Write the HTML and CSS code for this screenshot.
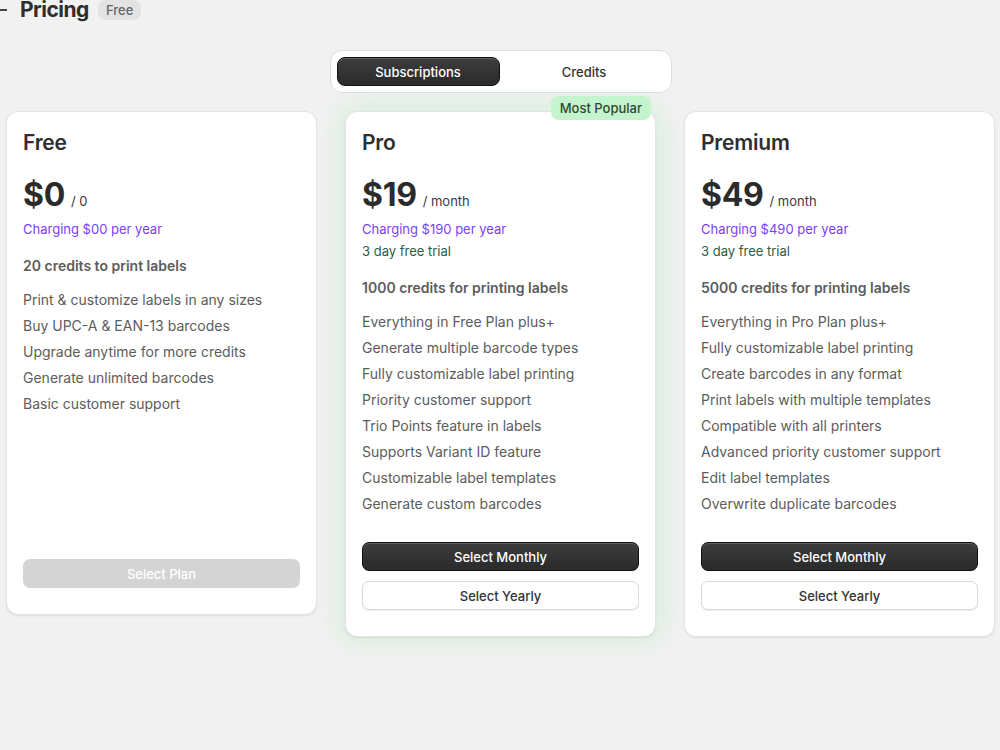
FILE: index.html
```html
<!DOCTYPE html>
<html lang="en">
<head>
    <meta charset="UTF-8">
    <meta name="viewport" content="width=device-width, initial-scale=1.0">
    <title>Pricing</title>
    <link rel="stylesheet" href="styles.css">
</head>
<body>
    <header class="page-header">
        <span class="back-dash"></span>
        <h1>Pricing</h1>
        <span class="tag">Free</span>
    </header>

    <main class="page">
        <div class="toggle">
            <button class="toggle-btn active">Subscriptions</button>
            <button class="toggle-btn">Credits</button>
        </div>

        <div class="plans">
            <!-- Free -->
            <div class="plan plan-free">
                <h2>Free</h2>
                <div class="price"><span class="amount">$0</span><span class="period">/ 0</span></div>
                <p class="charge">Charging $00 per year</p>
                <p class="credits">20 credits to print labels</p>
                <ul class="features">
                    <li>Print &amp; customize labels in any sizes</li>
                    <li>Buy UPC-A &amp; EAN-13 barcodes</li>
                    <li>Upgrade anytime for more credits</li>
                    <li>Generate unlimited barcodes</li>
                    <li>Basic customer support</li>
                </ul>
                <div class="actions">
                    <button class="btn btn-disabled">Select Plan</button>
                </div>
            </div>

            <!-- Pro -->
            <div class="plan plan-popular">
                <span class="badge">Most Popular</span>
                <h2>Pro</h2>
                <div class="price"><span class="amount">$19</span><span class="period">/ month</span></div>
                <p class="charge">Charging $190 per year</p>
                <p class="trial">3 day free trial</p>
                <p class="credits">1000 credits for printing labels</p>
                <ul class="features">
                    <li>Everything in Free Plan plus+</li>
                    <li>Generate multiple barcode types</li>
                    <li>Fully customizable label printing</li>
                    <li>Priority customer support</li>
                    <li>Trio Points feature in labels</li>
                    <li>Supports Variant ID feature</li>
                    <li>Customizable label templates</li>
                    <li>Generate custom barcodes</li>
                </ul>
                <div class="actions">
                    <button class="btn btn-dark">Select Monthly</button>
                    <button class="btn btn-light">Select Yearly</button>
                </div>
            </div>

            <!-- Premium -->
            <div class="plan">
                <h2>Premium</h2>
                <div class="price"><span class="amount">$49</span><span class="period">/ month</span></div>
                <p class="charge">Charging $490 per year</p>
                <p class="trial">3 day free trial</p>
                <p class="credits">5000 credits for printing labels</p>
                <ul class="features">
                    <li>Everything in Pro Plan plus+</li>
                    <li>Fully customizable label printing</li>
                    <li>Create barcodes in any format</li>
                    <li>Print labels with multiple templates</li>
                    <li>Compatible with all printers</li>
                    <li>Advanced priority customer support</li>
                    <li>Edit label templates</li>
                    <li>Overwrite duplicate barcodes</li>
                </ul>
                <div class="actions">
                    <button class="btn btn-dark">Select Monthly</button>
                    <button class="btn btn-light">Select Yearly</button>
                </div>
            </div>
        </div>
    </main>
</body>
</html>
```

FILE: styles.css
```css
:root {
    --bg: #f1f1f1;
    --white: #ffffff;
    --text: #303030;
    --muted: #5c5c5c;
    --purple: #7b3ff2;
    --green-text: #2d5e45;
    --border: #e3e3e3;
    --radius: 12px;
}

* {
    box-sizing: border-box;
    margin: 0;
    padding: 0;
}

body {
    font-family: 'Inter', 'Roboto', 'Noto Sans', sans-serif;
    color: var(--text);
    background-color: var(--bg);
    min-height: 100vh;
}

button {
    font-family: inherit;
    cursor: pointer;
}

.page-header {
    display: flex;
    align-items: center;
    height: 20px;
}

.back-dash {
    width: 7px;
    height: 1.5px;
    background-color: #444;
    margin-right: 13px;
}

.page-header h1 {
    font-size: 21px;
    line-height: 20px;
    font-weight: 700;
    letter-spacing: -0.5px;
    color: #2e2e2e;
}

.tag {
    margin-left: 9px;
    padding: 1px 8px;
    background-color: #e3e3e3;
    border-radius: 8px;
    font-size: 13px;
    font-weight: 500;
    line-height: 18px;
    color: #666;
}

.page {
    padding: 30px 5px 40px 6px;
}

.toggle {
    display: flex;
    gap: 4px;
    width: 342px;
    margin: 0 auto;
    padding: 6px;
    background-color: var(--white);
    border: 1px solid #dedede;
    border-radius: 12px;
}

.toggle-btn {
    flex: 1;
    height: 29px;
    border: none;
    background: transparent;
    border-radius: 8px;
    font-size: 13px;
    font-weight: 500;
    color: #333;
}

.toggle-btn.active {
    background: linear-gradient(#3d3d3d, #2a2a2a);
    border: 1px solid #111;
    box-shadow: inset 0 1px 0 rgba(255, 255, 255, 0.18);
    color: #fff;
}

.plans {
    display: grid;
    grid-template-columns: repeat(3, 1fr);
    gap: 28px;
    align-items: start;
    margin-top: 18px;
}

.plan {
    position: relative;
    background-color: var(--white);
    border: 1px solid var(--border);
    border-radius: var(--radius);
    box-shadow: 0 1px 2px rgba(0, 0, 0, 0.08);
    padding: 17px 16px 26px;
}

.plan-popular {
    box-shadow: 0 0 24px 6px rgba(150, 235, 170, 0.28), 0 1px 2px rgba(0, 0, 0, 0.08);
}

.badge {
    position: absolute;
    top: -16px;
    right: 4px;
    padding: 0 9px;
    height: 24px;
    line-height: 24px;
    background-color: #c3f4cd;
    border-radius: 8px;
    font-size: 13px;
    font-weight: 500;
    color: #2d4a38;
}

.plan h2 {
    font-size: 21px;
    line-height: 28px;
    font-weight: 600;
    letter-spacing: -0.2px;
    color: #2e2e2e;
}

.price {
    display: flex;
    align-items: baseline;
    gap: 6px;
    margin-top: 16px;
    height: 44px;
    line-height: 44px;
}

.amount {
    font-size: 32px;
    font-weight: 700;
    letter-spacing: -0.3px;
    color: #2b2b2b;
}

.period {
    font-size: 13px;
    color: #3a3a3a;
}

.charge,
.trial {
    font-size: 13px;
    line-height: 22px;
}

.charge {
    margin-top: 1px;
    color: var(--purple);
}

.trial {
    color: var(--green-text);
}

.credits {
    margin-top: 15px;
    font-size: 14px;
    line-height: 22px;
    font-weight: 600;
    color: var(--muted);
}

.features {
    list-style: none;
    margin-top: 10px;
}

.features li {
    font-size: 14px;
    line-height: 26px;
    color: var(--muted);
}

.plan-free .features {
    min-height: 247px;
}

.actions {
    display: flex;
    flex-direction: column;
    gap: 10px;
    margin-top: 25px;
}

.btn {
    height: 29px;
    border-radius: 7px;
    font-size: 13px;
    font-weight: 500;
}

.btn-disabled {
    background-color: #d4d4d4;
    border: none;
    color: #fff;
    cursor: default;
}

.btn-dark {
    background: linear-gradient(#3d3d3d, #2a2a2a);
    border: 1px solid #111;
    box-shadow: inset 0 1px 0 rgba(255, 255, 255, 0.18);
    color: #fff;
}

.btn-light {
    background-color: var(--white);
    border: 1px solid #d9d9d9;
    box-shadow: 0 1px 0 rgba(0, 0, 0, 0.08);
    color: #333;
}
```
